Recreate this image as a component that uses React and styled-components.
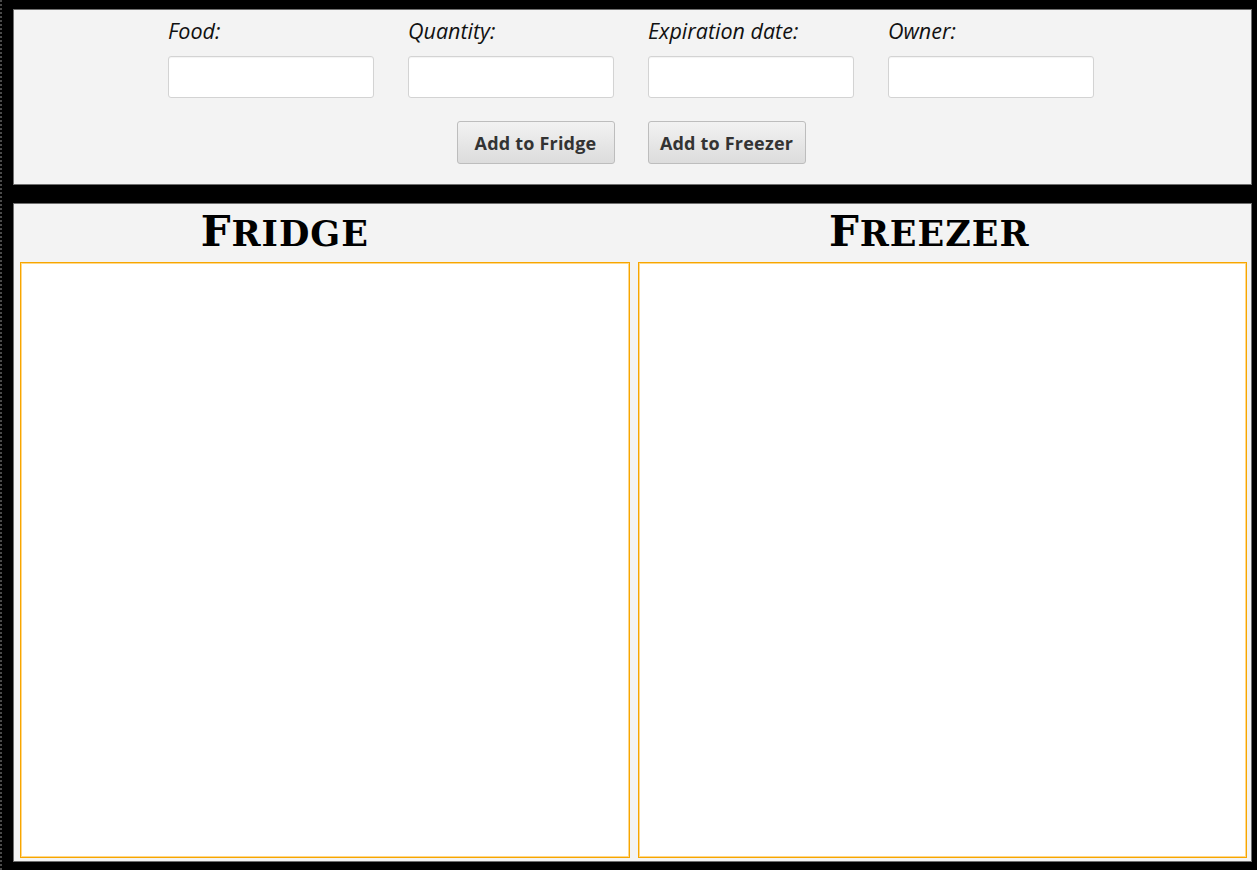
import React from "react";
import styled, { createGlobalStyle } from "styled-components";

const GlobalStyle = createGlobalStyle`
  html, body {
    margin: 0;
    padding: 0;
    background: #000;
  }
  * {
    box-sizing: border-box;
  }
`;

const fields = ["Food:", "Quantity:", "Expiration date:", "Owner:"];

export default function App() {
  return (
    <>
      <GlobalStyle />
      <Page>
        <FormPanel>
          <FieldRow>
            {fields.map((label) => (
              <Field key={label}>
                <Label>{label}</Label>
                <Input type="text" />
              </Field>
            ))}
          </FieldRow>
          <ButtonRow>
            <Button>Add to Fridge</Button>
            <Button>Add to Freezer</Button>
          </ButtonRow>
        </FormPanel>
        <StoragePanel>
          <Column>
            <Title $shift={80}>
              F<Small>ridge</Small>
            </Title>
            <Box />
          </Column>
          <Column>
            <Title $shift={26}>
              F<Small>reezer</Small>
            </Title>
            <Box />
          </Column>
        </StoragePanel>
      </Page>
    </>
  );
}

const Page = styled.div`
  height: 870px;
  border-left: 2px dotted #4a4a4a;
  padding: 9px 5px 8px 11px;
  display: flex;
  flex-direction: column;
  gap: 18px;
`;

const FormPanel = styled.div`
  height: 176px;
  background: #f3f3f3;
  border: 1px solid #6f6f6f;
  display: flex;
  flex-direction: column;
  align-items: center;
  padding: 7px 3px 0 0;
`;

const FieldRow = styled.div`
  display: flex;
  gap: 34px;
`;

const Field = styled.div`
  display: flex;
  flex-direction: column;
  gap: 11px;
`;

const Label = styled.label`
  font-family: "Open Sans", "Noto Sans", sans-serif;
  font-style: italic;
  font-size: 21.5px;
  line-height: 28px;
  color: #111;
`;

const Input = styled.input`
  width: 206px;
  height: 42px;
  background: #fff;
  border: 1px solid #d3d3d3;
  border-radius: 3px;
  box-shadow: inset 0 1px 1px rgba(0, 0, 0, 0.05);
  outline: none;
`;

const ButtonRow = styled.div`
  display: flex;
  gap: 33px;
  margin-top: 23px;
`;

const Button = styled.button`
  width: 158px;
  height: 43px;
  border: 1px solid #bdbdbd;
  border-radius: 3px;
  background: linear-gradient(#f2f2f2, #dcdcdc);
  font-family: "Open Sans", "Noto Sans", sans-serif;
  font-weight: 700;
  font-size: 18px;
  letter-spacing: 0.2px;
  color: #333;
  cursor: pointer;
`;

const StoragePanel = styled.div`
  flex: 1;
  background: #f3f3f3;
  border: 1px solid #6f6f6f;
  display: grid;
  grid-template-columns: 1fr 1fr;
  gap: 8px;
  padding: 0 4px 3px 6px;
`;

const Column = styled.div`
  display: flex;
  flex-direction: column;
  min-height: 0;
`;

const Title = styled.h2`
  margin: 0;
  height: 58px;
  padding-top: 3px;
  padding-right: ${(p) => p.$shift}px;
  text-align: center;
  font-family: "DejaVu Serif", "Liberation Serif", serif;
  font-weight: 700;
  font-size: 42px;
  line-height: 50px;
  letter-spacing: 1px;
  color: #000;
`;

const Small = styled.span`
  text-transform: uppercase;
  font-size: 35px;
`;

const Box = styled.div`
  flex: 1;
  background: #fff;
  border: 1px solid #f7a600;
  box-shadow: inset 0 0 0 1px #ffd88a;
`;
